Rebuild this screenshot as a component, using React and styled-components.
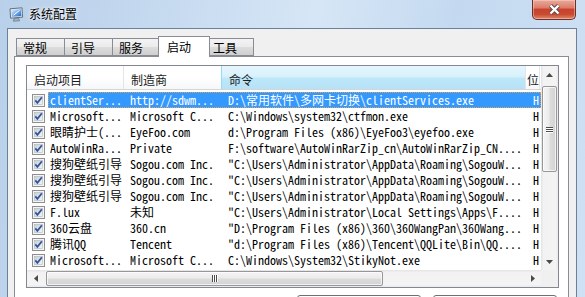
import styled, { createGlobalStyle } from "styled-components"

const GlobalStyle = createGlobalStyle`
  html, body { margin: 0; padding: 0; background: #ffffff; }
  body { font-family: "Noto Sans CJK SC", "Liberation Sans", sans-serif; font-size: 12px; color: #000; }
  * { box-sizing: border-box; }
`

const items = [
    { name: 'clientSer...', maker: 'http://sdwm...', cmd: 'D:\\常用软件\\多网卡切换\\clientServices.exe', selected: true },
    { name: 'Microsoft...', maker: 'Microsoft C...', cmd: 'C:\\Windows\\system32\\ctfmon.exe' },
    { name: '眼睛护士(...', maker: 'EyeFoo.com', cmd: 'd:\\Program Files (x86)\\EyeFoo3\\eyefoo.exe' },
    { name: 'AutoWinRa...', maker: 'Private', cmd: 'F:\\software\\AutoWinRarZip_cn\\AutoWinRarZip_CN....' },
    { name: '搜狗壁纸引导', maker: 'Sogou.com Inc.', cmd: '"C:\\Users\\Administrator\\AppData\\Roaming\\SogouW...' },
    { name: '搜狗壁纸引导', maker: 'Sogou.com Inc.', cmd: '"C:\\Users\\Administrator\\AppData\\Roaming\\SogouW...' },
    { name: '搜狗壁纸引导', maker: 'Sogou.com Inc.', cmd: '"C:\\Users\\Administrator\\AppData\\Roaming\\SogouW...' },
    { name: 'F.lux', maker: '未知', cmd: '"C:\\Users\\Administrator\\Local Settings\\Apps\\F....' },
    { name: '360云盘', maker: '360.cn', cmd: '"D:\\Program Files (x86)\\360\\360WangPan\\360Wang...' },
    { name: '腾讯QQ', maker: 'Tencent', cmd: '"d:\\Program Files (x86)\\Tencent\\QQLite\\Bin\\QQ....' },
    { name: 'Microsoft...', maker: 'Microsoft C...', cmd: 'C:\\Windows\\System32\\StikyNot.exe' },
]

const tabs = ['常规', '引导', '服务', '启动', '工具']

function AppIcon() {
    return (
        <svg width="15" height="15" viewBox="0 0 15 15">
            <defs>
                <linearGradient id="scr" x1="0" y1="0" x2="1" y2="1">
                    <stop offset="0" stopColor="#e8f2fc" />
                    <stop offset="0.45" stopColor="#7fb4ea" />
                    <stop offset="1" stopColor="#1f5fb8" />
                </linearGradient>
            </defs>
            <path d="M1 1.8 L13 0.8 L13.6 10.2 L1.6 11.2 Z" fill="#dfe6ee" stroke="#56677c" strokeWidth="0.9" />
            <path d="M2.6 3 L11.8 2.2 L12.3 9 L3 9.8 Z" fill="url(#scr)" />
            <path d="M4.5 8.2 L10.5 3.4" stroke="#ffffff" strokeWidth="1" />
            <path d="M5.2 11.4 L9.4 11 L10.6 13.8 L4.4 14.2 Z" fill="#a7b2be" stroke="#56677c" strokeWidth="0.6" />
        </svg>
    )
}

function CloseGlyph() {
    return (
        <svg width="13" height="11" viewBox="0 0 13 11">
            <path d="M2.5 1.5 L10.5 9.5 M10.5 1.5 L2.5 9.5" stroke="#5b4a48" strokeWidth="4.2" />
            <path d="M2.5 1.5 L10.5 9.5 M10.5 1.5 L2.5 9.5" stroke="#ffffff" strokeWidth="2.4" />
        </svg>
    )
}

function Check() {
    return (
        <svg width="13" height="13" viewBox="0 0 13 13">
            <defs>
                <linearGradient id="cbg" x1="0" y1="0" x2="1" y2="1">
                    <stop offset="0" stopColor="#c9cdd3" />
                    <stop offset="1" stopColor="#f6f6f6" />
                </linearGradient>
            </defs>
            <rect x="0.5" y="0.5" width="12" height="12" fill="#f4f4f4" stroke="#8e8f8f" />
            <rect x="2.5" y="2.5" width="8" height="8" fill="url(#cbg)" stroke="#b1b4b8" strokeWidth="0.6" />
            <path d="M3.3 6.4 L5.4 8.9 L9.9 3.3" fill="none" stroke="#2f57a0" strokeWidth="1.8" />
        </svg>
    )
}

function Arrow({ dir }) {
    const d = {
        up: 'M0 4 L3.5 0 L7 4 Z',
        down: 'M0 0 L3.5 4 L7 0 Z',
        left: 'M4 0 L0 3.5 L4 7 Z',
        right: 'M0 0 L4 3.5 L0 7 Z',
    }[dir]
    const vertical = dir === 'up' || dir === 'down'
    return (
        <svg width={vertical ? 7 : 4} height={vertical ? 4 : 7} viewBox={vertical ? '0 0 7 4' : '0 0 4 7'}>
            <path d={d} fill="#4a4a4a" />
        </svg>
    )
}

export default function App() {
    return (
        <>
            <GlobalStyle />
            <Window>
                <TitleBar>
                    <AppIcon />
                    <Title>系统配置</Title>
                    <CloseButton><CloseGlyph /></CloseButton>
                </TitleBar>
                <Body>
                    <Client>
                        <TabStrip>
                            {tabs.map((t) => (
                                <Tab key={t} $active={t === '启动'}>{t}</Tab>
                            ))}
                        </TabStrip>
                        <Panel>
                            <ListView>
                                <Header>
                                    <HeaderCell $w={97}>启动项目</HeaderCell>
                                    <HeaderCell $w={98}>制造商</HeaderCell>
                                    <HeaderCell $w={305} $active>命令</HeaderCell>
                                    <HeaderCell $w={14} $pad={1}>位</HeaderCell>
                                </Header>
                                <Rows>
                                    {items.map((it, i) => (
                                        <Row key={i}>
                                            <CheckCell><Check /></CheckCell>
                                            <RowBody $selected={it.selected}>
                                                <Cell $w={76} $pad={2}>{it.name}</Cell>
                                                <Cell $w={98} $pad={6}>{it.maker}</Cell>
                                                <Cell $w={305} $pad={6}>{it.cmd}</Cell>
                                                <Cell $w={14} $pad={6}>H</Cell>
                                            </RowBody>
                                        </Row>
                                    ))}
                                </Rows>
                                <VScroll>
                                    <ArrowBox><Arrow dir="up" /></ArrowBox>
                                    <VTrack>
                                        <VThumb><VGrip><span /><span /><span /></VGrip></VThumb>
                                    </VTrack>
                                    <ArrowBox><Arrow dir="down" /></ArrowBox>
                                </VScroll>
                                <HScroll>
                                    <ArrowBox><Arrow dir="left" /></ArrowBox>
                                    <HTrack>
                                        <HThumb><HGrip><span /><span /><span /></HGrip></HThumb>
                                    </HTrack>
                                    <ArrowBox><Arrow dir="right" /></ArrowBox>
                                </HScroll>
                                <Corner />
                            </ListView>
                            <ButtonRow>
                                <Button aria-label="全部启用(E)" />
                                <Button aria-label="全部禁用(D)" />
                            </ButtonRow>
                        </Panel>
                    </Client>
                </Body>
            </Window>
        </>
    )
}

const Window = styled.div`
width: 585px;
height: 297px;
overflow: hidden;
display: flex;
flex-direction: column;
background: linear-gradient(100deg, #b9d0ea 0%, #c5d9ef 25%, #d6e6f6 50%, #c4d9f0 72%, #cfe1f4 100%);
`

const TitleBar = styled.div`
height: 28px;
flex: none;
display: flex;
align-items: center;
padding-left: 9px;
`

const Title = styled.span`
margin-left: 5px;
font-size: 12px;
line-height: 14px;
color: #000;
text-shadow: 0 0 5px rgba(255, 255, 255, 0.95), 0 0 2px #ffffff;
`

const CloseButton = styled.div`
align-self: flex-start;
margin-left: auto;
margin-right: 9px;
width: 44px;
height: 20px;
display: flex;
align-items: center;
justify-content: center;
border: 1px solid #6d2f28;
border-top: none;
border-radius: 0 0 5px 5px;
background: linear-gradient(to bottom, #e9aa9c 0%, #dc7e6b 40%, #c8432f 50%, #c9492f 75%, #dd8a6c 100%);
box-shadow: inset 0 0 0 1px rgba(255, 220, 210, 0.45);
`

const Body = styled.div`
flex: 1;
min-height: 0;
display: flex;
padding: 0 8px 0 7px;
`

const Client = styled.div`
flex: 1;
border: 1px solid #6d8099;
border-bottom: none;
background: #f0f0f0;
padding: 7px 7px 0 6px;
`

const TabStrip = styled.div`
height: 20px;
display: flex;
align-items: flex-end;
padding-left: 2px;
`

const Tab = styled.div`
position: relative;
width: ${(p) => (p.$active ? 52 : 48)}px;
height: ${(p) => (p.$active ? 21 : 18)}px;
margin: 0 ${(p) => (p.$active ? -2 : 0)}px ${(p) => (p.$active ? -1 : 0)}px;
z-index: ${(p) => (p.$active ? 2 : 1)};
padding: ${(p) => (p.$active ? '2px 0 0 8px' : '1px 0 0 6px')};
border: 1px solid #898c95;
border-bottom: ${(p) => (p.$active ? 'none' : '1px solid #898c95')};
border-right: ${(p) => (p.$active ? '1px solid #898c95' : 'none')};
background: ${(p) => (p.$active ? '#ffffff' : 'linear-gradient(to bottom, #f3f3f3 0%, #ebebeb 50%, #dddddd 51%, #cfcfcf 100%)')};
font-size: 12px;
line-height: 15px;
color: #000;

&:last-child {
  border-right: 1px solid #898c95;
  width: 46px;
  padding-left: 4px;
}
`

const Panel = styled.div`
border: 1px solid #898c95;
background: #ffffff;
padding: 8px 9px 20px 11px;
`

const ListView = styled.div`
border: 1px solid #828790;
display: grid;
grid-template-columns: 514px 17px;
grid-template-rows: 24px 180px 17px;
`

const Header = styled.div`
grid-column: 1;
grid-row: 1;
display: flex;
overflow: hidden;
background: linear-gradient(to bottom, #ffffff 0%, #ffffff 50%, #f6f7f9 100%);
border-bottom: 1px solid #d5d5d5;
`

const HeaderCell = styled.div`
flex: none;
width: ${(p) => p.$w}px;
padding: 3px 0 0 ${(p) => (p.$pad !== undefined ? p.$pad : 7)}px;
display: flex;
align-items: center;
font-size: 12px;
color: #1a1a1a;
white-space: nowrap;
overflow: hidden;
border-right: 1px solid #e2e6ec;
border-left: ${(p) => (p.$active ? '1px solid #96d9f9' : 'none')};
margin-left: ${(p) => (p.$active ? -1 : 0)}px;
background: ${(p) => (p.$active ? 'linear-gradient(to bottom, #e6f6fd 0%, #d8f1fc 45%, #bde6f9 55%, #b6e2f7 100%)' : 'transparent')};
`

const Rows = styled.div`
grid-column: 1;
grid-row: 2;
padding-top: 2px;
overflow: hidden;
background: #ffffff;
`

const Row = styled.div`
height: 16px;
display: flex;
align-items: center;
`

const CheckCell = styled.div`
flex: none;
width: 21px;
height: 16px;
padding-left: 5px;
display: flex;
align-items: center;
`

const RowBody = styled.div`
flex: 1;
height: 16px;
display: flex;
align-items: center;
overflow: hidden;
background: ${(p) => (p.$selected ? '#3399ff' : 'transparent')};
color: ${(p) => (p.$selected ? '#ffffff' : '#000000')};
outline: ${(p) => (p.$selected ? '1px dotted #e9a04a' : 'none')};
outline-offset: -1px;
`

const Cell = styled.div`
flex: none;
width: ${(p) => p.$w}px;
padding-left: ${(p) => p.$pad}px;
font-family: "Noto Sans Mono CJK SC", "Noto Sans CJK SC", "Liberation Mono", monospace;
font-size: 12px;
line-height: 16px;
white-space: nowrap;
overflow: hidden;
`

const VScroll = styled.div`
grid-column: 2;
grid-row: 1 / 3;
display: flex;
flex-direction: column;
background: linear-gradient(to right, #e4e4e4 0%, #f2f2f2 15%, #f4f4f4 85%, #eaeaea 100%);
`

const HScroll = styled.div`
grid-column: 1;
grid-row: 3;
display: flex;
background: linear-gradient(to bottom, #e4e4e4 0%, #f2f2f2 15%, #f4f4f4 85%, #eaeaea 100%);
`

const Corner = styled.div`
grid-column: 2;
grid-row: 3;
background: #f0f0f0;
`

const ArrowBox = styled.div`
flex: none;
width: 17px;
height: 17px;
display: flex;
align-items: center;
justify-content: center;
`

const VTrack = styled.div`
flex: 1;
padding: 3px 1px 0;
`

const VThumb = styled.div`
height: 86px;
border: 1px solid #979797;
border-radius: 2px;
background: linear-gradient(to right, #f4f4f4 0%, #ececec 45%, #dcdcdc 55%, #d2d2d2 100%);
box-shadow: inset 0 0 0 1px rgba(255, 255, 255, 0.7);
display: flex;
align-items: center;
justify-content: center;
`

const VGrip = styled.div`
display: flex;
flex-direction: column;
gap: 1px;

span {
  width: 7px;
  height: 1px;
  background: #4d4d4d;
  box-shadow: 0 1px 0 #ffffff;
}
`

const HTrack = styled.div`
flex: 1;
padding: 1px 0 0 2px;
`

const HThumb = styled.div`
width: 337px;
height: 15px;
border: 1px solid #979797;
border-radius: 2px;
background: linear-gradient(to bottom, #f4f4f4 0%, #ececec 45%, #dcdcdc 55%, #d2d2d2 100%);
box-shadow: inset 0 0 0 1px rgba(255, 255, 255, 0.7);
display: flex;
align-items: center;
justify-content: center;
`

const HGrip = styled.div`
display: flex;
gap: 1px;

span {
  width: 1px;
  height: 7px;
  background: #4d4d4d;
  box-shadow: 1px 0 0 #ffffff;
}
`

const ButtonRow = styled.div`
margin-top: 7px;
display: flex;
justify-content: flex-end;
gap: 12px;
padding-right: 2px;
`

const Button = styled.div`
width: 124px;
height: 23px;
border: 1px solid #707070;
border-radius: 3px;
background: linear-gradient(to bottom, #f2f2f2 0%, #ebebeb 50%, #dddddd 51%, #cfcfcf 100%);
box-shadow: inset 0 0 0 1px rgba(255, 255, 255, 0.8);
`
